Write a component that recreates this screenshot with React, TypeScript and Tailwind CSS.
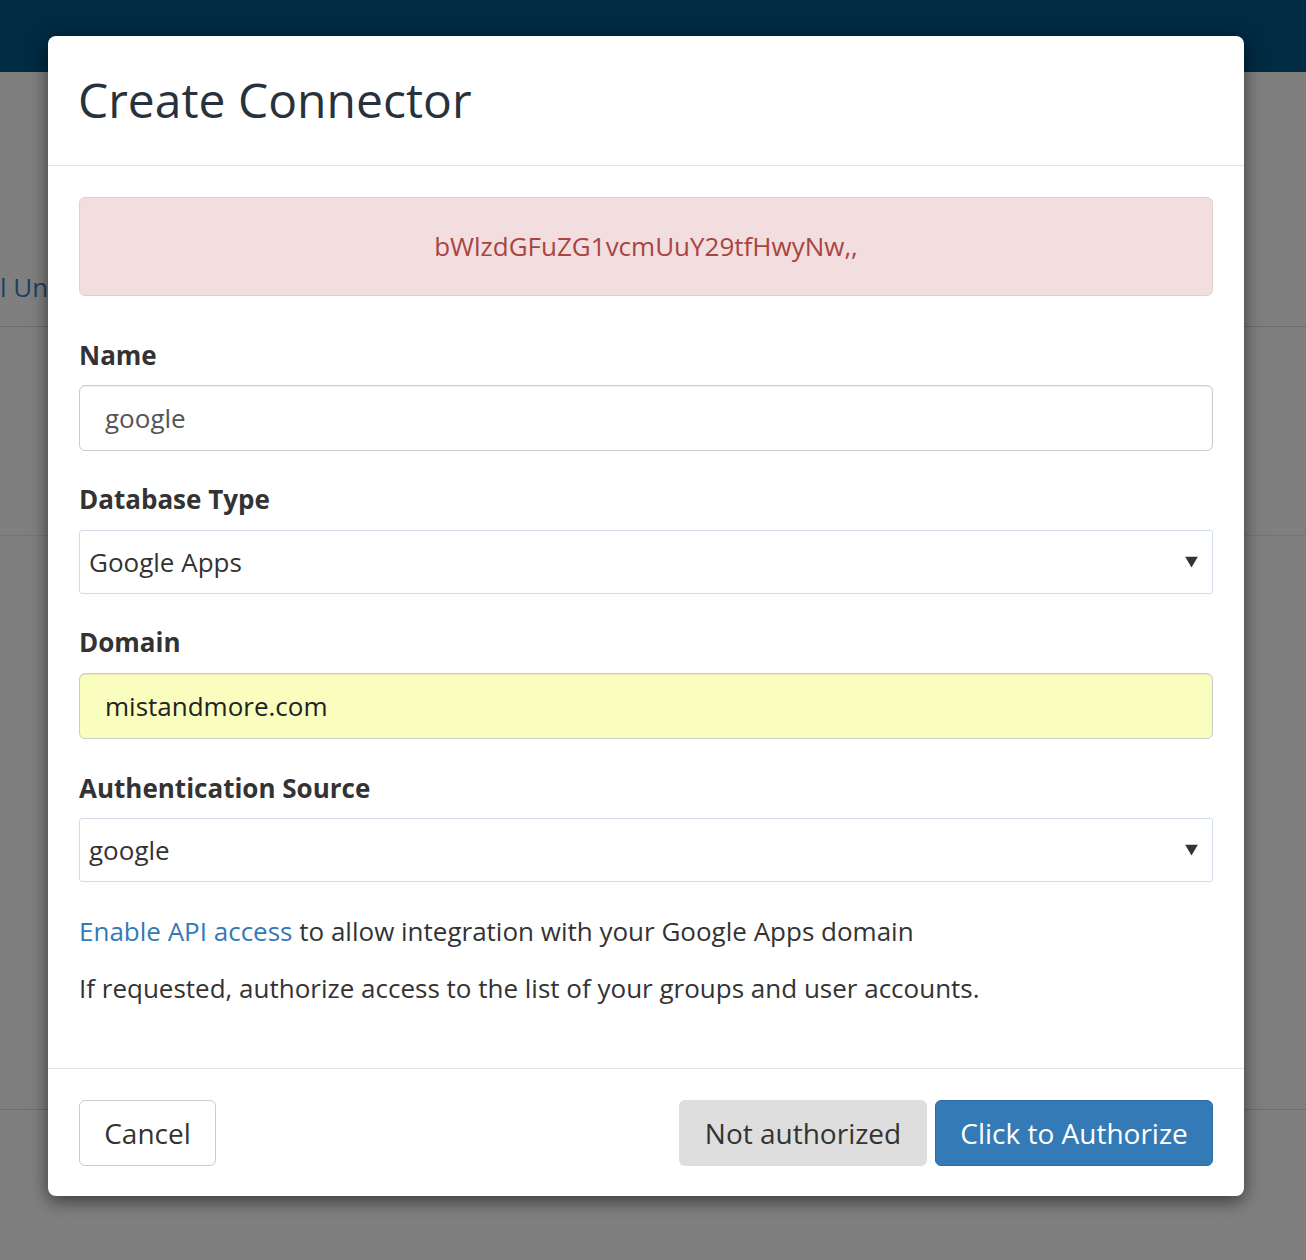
import React from "react"

const font = { fontFamily: '"Open Sans", "Noto Sans", sans-serif' }

function Caret() {
  return (
    <svg width="13" height="11" viewBox="0 0 13 11" className="absolute right-[14px] top-1/2 -translate-y-1/2">
      <polygon points="0,0 13,0 6.5,11" fill="#333" />
    </svg>
  )
}

function Label({ children, className = "" }: { children: React.ReactNode; className?: string }) {
  return (
    <div className={`text-[26px] leading-[34px] font-bold text-[#333] ${className}`}>{children}</div>
  )
}

function TextInput({ value, className = "" }: { value: string; className?: string }) {
  return (
    <div
      className={`h-[66px] flex items-center pl-[25px] border border-[#ccc] rounded-[6px] text-[26px] shadow-[inset_0_1px_1px_rgba(0,0,0,0.075)] ${className}`}
    >
      {value}
    </div>
  )
}

function Select({ value, className = "" }: { value: string; className?: string }) {
  return (
    <div
      className={`relative h-[64px] flex items-center pl-[9px] border border-[#d3dce6] rounded-[3px] bg-white text-[26px] text-[#333] ${className}`}
    >
      {value}
      <Caret />
    </div>
  )
}

export default function App() {
  return (
    <div className="relative w-full h-[1260px] overflow-hidden bg-[#7f7f7f]" style={font}>
      {/* page behind the overlay */}
      <div className="h-[72px] bg-[#012a43]" />
      <div className="h-[255px] border-b border-[#6c6c6c] pt-[197px]">
        <div className="text-[26px] leading-[36px] text-[#1d4063] whitespace-nowrap">l Units</div>
      </div>
      <div className="h-[209px] border-b border-[#747474]" />
      <div className="h-[574px] border-b border-[#6c6c6c]" />

      {/* modal */}
      <div className="absolute left-[48px] top-[36px] w-[1196px] bg-white rounded-[8px] shadow-[0_5px_18px_rgba(0,0,0,0.55)]">
        <div className="h-[130px] flex items-center px-[30px] border-b border-[#e5e5e5]">
          <h2 className="text-[48px] leading-none text-[#28323c] pb-[2px]">Create Connector</h2>
        </div>

        <div className="px-[31px] pt-[31px] pb-[61px]">
          <div className="h-[99px] flex items-center justify-center bg-[#f2dede] border border-[#ebccd1] rounded-[6px] text-[26px] text-[#a94442]">
            bWlzdGFuZG1vcmUuY29tfHwyNw,,
          </div>

          <Label className="mt-[42px] mb-[13px]">Name</Label>
          <TextInput value="google" className="text-[#555] bg-white" />

          <Label className="mt-[31px] mb-[14px]">Database Type</Label>
          <Select value="Google Apps" />

          <Label className="mt-[31px] mb-[14px]">Domain</Label>
          <TextInput value="mistandmore.com" className="text-[#222] bg-[#f9fdbd]" />

          <Label className="mt-[32px] mb-[13px]">Authentication Source</Label>
          <Select value="google" />

          <p className="mt-[30px] text-[26px] leading-[38px] text-[#333]">
            <a className="text-[#337ab7]">Enable API access</a> to allow integration with your Google Apps domain
          </p>
          <p className="mt-[19px] text-[26px] leading-[38px] text-[#333]">
            If requested, authorize access to the list of your groups and user accounts.
          </p>
        </div>

        <div className="border-t border-[#e5e5e5] px-[31px] pt-[31px] pb-[30px] flex items-center">
          <button className="w-[137px] h-[66px] border border-[#ccc] rounded-[6px] bg-white text-[28px] text-[#333]">
            Cancel
          </button>
          <div className="ml-auto flex gap-[8px]">
            <button className="w-[248px] h-[66px] rounded-[6px] bg-[#dedede] text-[28px] text-[#333]">
              Not authorized
            </button>
            <button className="w-[278px] h-[66px] rounded-[6px] bg-[#337ab7] border border-[#2e6da4] text-[28px] text-white">
              Click to Authorize
            </button>
          </div>
        </div>
      </div>
    </div>
  )
}
